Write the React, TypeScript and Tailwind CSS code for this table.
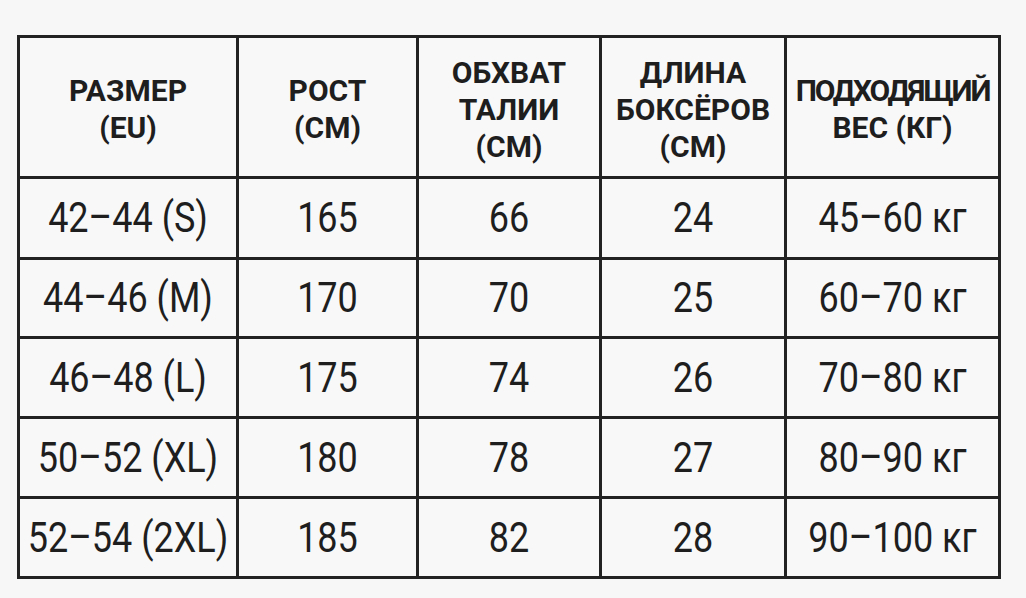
import React from "react";

const headers = [
  ["РАЗМЕР", "(EU)"],
  ["РОСТ", "(СМ)"],
  ["ОБХВАТ", "ТАЛИИ", "(СМ)"],
  ["ДЛИНА", "БОКСЁРОВ", "(СМ)"],
  ["ПОДХОДЯЩИЙ", "ВЕС (КГ)"],
];

const rows = [
  ["42–44 (S)", "165", "66", "24", "45–60 кг"],
  ["44–46 (M)", "170", "70", "25", "60–70 кг"],
  ["46–48 (L)", "175", "74", "26", "70–80 кг"],
  ["50–52 (XL)", "180", "78", "27", "80–90 кг"],
  ["52–54 (2XL)", "185", "82", "28", "90–100 кг"],
];

const App = () => {
  return (
    <div className="w-[1026px] h-[598px] bg-[#f7f7f7] pt-[35px] pl-[17px] font-['Roboto',sans-serif] text-[#1e1e1e]">
      <div className="w-[984px] h-[544px] grid grid-cols-[216px_177px_180px_182px_211px] grid-rows-[138px_78px_76px_77px_77px_77px] gap-[3px] p-[3px] bg-[#222]">
        {/* header */}
        {headers.map((h, i) => (
          <div
            key={i}
            className="bg-[#f8f8f8] flex flex-col items-center justify-center pt-[4px] text-[30px] font-bold leading-[37px] text-center"
          >
            {h.map((line) => (
              <span
                key={line}
                className={line === "ПОДХОДЯЩИЙ" ? "tracking-[-2.2px] whitespace-nowrap" : "whitespace-nowrap"}
              >
                {line}
              </span>
            ))}
          </div>
        ))}
        {/* rows */}
        {rows.map((r, ri) =>
          r.map((c, ci) => (
            <div
              key={ri + "-" + ci}
              className="bg-[#f8f8f8] flex items-center justify-center"
            >
              <span className="inline-block text-[36px] leading-none whitespace-nowrap scale-y-[1.17]">
                {c}
              </span>
            </div>
          ))
        )}
      </div>
    </div>
  );
};

export default App;
